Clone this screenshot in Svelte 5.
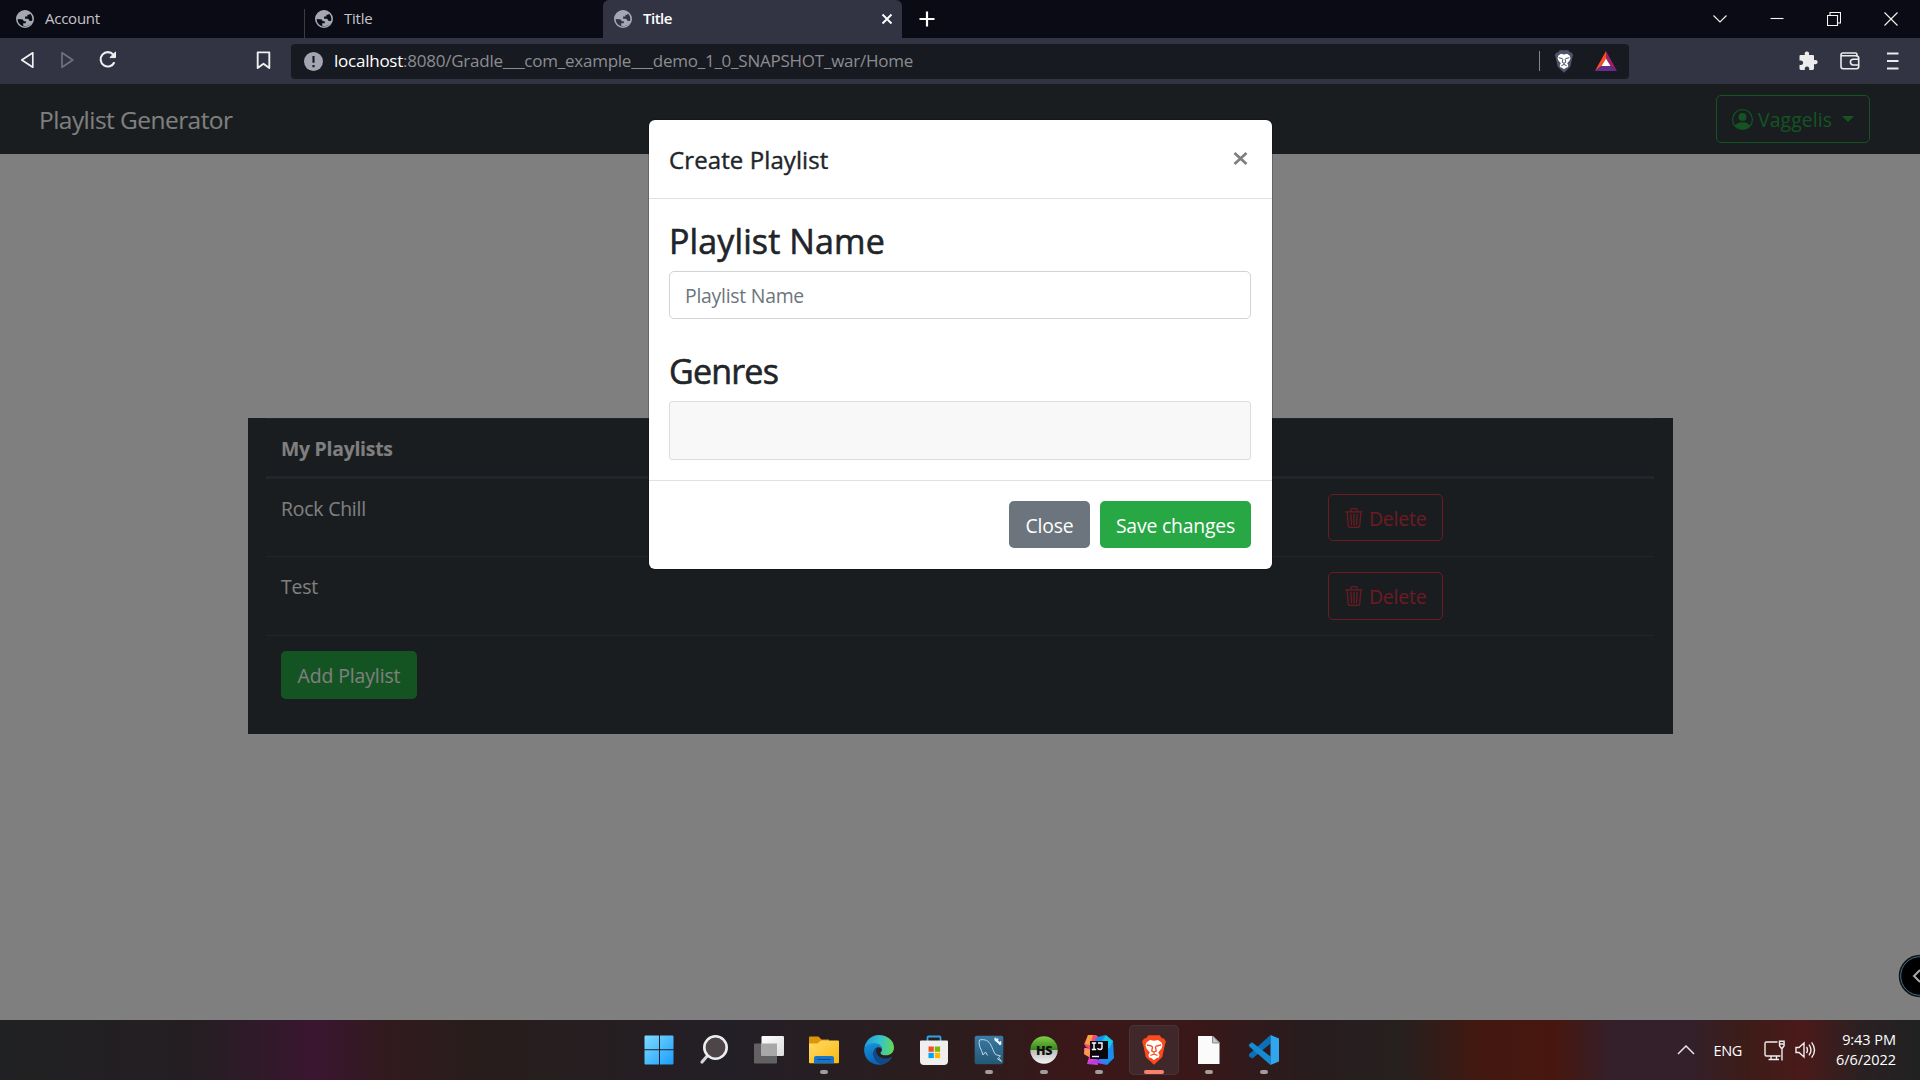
<script>
  const tabs = [
    { title: 'Account', active: false },
    { title: 'Title', active: false },
    { title: 'Title', active: true }
  ];
  const playlists = ['Rock Chill', 'Test'];
</script>

{#snippet globe()}
  <svg class="globe" viewBox="0 0 18 18">
    <circle cx="9" cy="9" r="8.2" fill="none" stroke="#a5a8b2" stroke-width="1.6" />
    <path fill="#a5a8b2" d="M9.8.6C5 .3.6 4 .6 9l4.8.2c1.500 0 2.200.9 2.200 2.100h2.200v1.900H7.200v2.600c3.900 1.300 8.600-1 9.800-5.200-.9.6-2.200.6-3.300.2-.9-.4-.8-1.900-1.900-2.100H9.100V6.600h2.300V4.700h1.500c.6 0 1.100-.5 1.100-1.200V2.400A8.300 8.300 0 0 0 9.800.6z" />
  </svg>
{/snippet}

{#snippet lion(body)}
  <path fill={body} d="M6.500 .3h11l2.600 3 1.900.1 2 3.300-1.100 2.900-2.600 12.400L12 29.800 3.700 22 1.100 9.600 0 6.700l2-3.300 1.900-.1z" />
  <path fill="#fff" d="M8 5l4 .8 4-.8 3.300 2.300 1.200 3-1 3.200-3.300 3.900 1.400 2.500-.8 2.600-2.200.6L12 25.200l-2.600-2.100-2.200-.6-.8-2.600 1.400-2.500-3.300-3.900-1-3.200 1.200-3z" />
  <g fill="none" stroke={body} stroke-width="1.300">
    <path d="M5 10l4.800 1.200M19 10l-4.800 1.200M9.500 11l1 1.200-.8 3.800L12 17.200l2.300-1.200-.8-3.800 1-1.200M12 17.200v2M8.500 20.500L12 18.900l3.500 1.600" />
  </g>
{/snippet}

<div class="screen">
  <header class="tabs">
    {#each tabs as tab, i}
      <div class="tab" class:active={tab.active} class:divided={i === 1}>
        {@render globe()}
        <span class="tab-title">{tab.title}</span>
        {#if tab.active}
          <svg class="tab-close" viewBox="0 0 12 12"><path d="M1.500 1.500l9 9m0-9l-9 9" stroke="#fff" stroke-width="1.900" /></svg>
        {/if}
      </div>
    {/each}
    <svg class="plus" viewBox="0 0 16 16"><path d="M8 .5v15M.5 8h15" stroke="#fff" stroke-width="2.200" /></svg>
    <div class="window-controls">
      <svg viewBox="0 0 14 14"><path d="M.5 3.500L7 10l6.500-6.500" /></svg>
      <svg viewBox="0 0 14 14"><path d="M.5 6.500h13" /></svg>
      <svg viewBox="0 0 14 14"><path d="M.5 3.500h10v10h-10zM3 3.500v-3h10.500v10.500h-3" /></svg>
      <svg viewBox="0 0 14 14"><path d="M.5.5l13 13m0-13l-13 13" /></svg>
    </div>
  </header>

  <div class="toolbar">
    <div class="nav-icons">
      <svg width="15" height="18" viewBox="0 0 15 18"><path d="M12.800 1.800v14.400L1.800 9z" fill="none" stroke="#f0f0f2" stroke-width="1.700" stroke-linejoin="round" /></svg>
      <svg width="15" height="18" viewBox="0 0 15 18"><path d="M2 1.800v14.400L12.800 9z" fill="none" stroke="#6e707d" stroke-width="1.700" stroke-linejoin="round" /></svg>
      <svg width="20" height="20" viewBox="0 0 20 20"><path d="M15.300 4.600A7.200 7.200 0 1 0 16.400 12.300" fill="none" stroke="#f0f0f2" stroke-width="2.100" /><path d="M17.500 2v5.600h-5.600z" fill="#f0f0f2" stroke="#f0f0f2" stroke-linejoin="round" /></svg>
    </div>
    <svg class="bookmark" viewBox="0 0 14 18"><path d="M1.500 1.300h11v14.900L7 12l-5.500 4.200z" fill="none" stroke="#f0f0f2" stroke-width="1.800" stroke-linejoin="round" /></svg>
    <div class="address">
      <svg class="info" viewBox="0 0 18 18"><circle cx="9" cy="9" r="9" fill="#a3a6b0" /><path d="M9 3.800v6.400M9 12.300v2.200" stroke="#181a21" stroke-width="2" /></svg>
      <span class="url"><b>localhost</b>:8080/Gradle___com_example___demo_1_0_SNAPSHOT_war/Home</span>
      <i class="address-divider"></i>
      <svg class="shield" viewBox="0 0 24 30">{@render lion('#50536a')}</svg>
      <svg class="bat" viewBox="0 0 22 20"><path d="M11 0v7.500L6.500 15 0 20z" fill="#ff4b24" /><path d="M11 0l11 20-6.500-5L11 7.500z" fill="#9e1f63" /><path d="M0 20l6.500-5h9l6.500 5z" fill="#662d91" /><path d="M11 7.500l4.500 7.500h-9z" fill="#fff" /></svg>
    </div>
    <div class="extensions">
      <svg width="20" height="20" viewBox="0 0 20 20"><path fill="#ececec" d="M2.500 4h4.400C6.200 1.900 7.100.5 8.900.5s2.700 1.400 2 3.500H15a1 1 0 0 1 1 1v4.200c2.200-.8 3.600.1 3.600 1.900S18.200 13.800 16 13v4.600a1.300 1.300 0 0 1-1.300 1.300h-3.600c.6-2.300-.4-3.500-2.100-3.500s-2.700 1.200-2.100 3.500H2.800a1.300 1.300 0 0 1-1.300-1.300v-3.800c2.300.6 3.600-.4 3.600-2.100S3.800 9 1.500 9.600V5a1 1 0 0 1 1-1z" /></svg>
      <svg class="wallet" width="20" height="18" viewBox="0 0 20 18"><path fill="none" stroke="#ececec" stroke-width="1.600" d="M3 1h12.500c1.200 0 1.600 1 1.600 2.700M1 3.700h14.500c2 0 3.200.8 3.200 2.400v8.500c0 1.300-.8 2.200-2.200 2.200H3.200C1.800 16.800 1 15.900 1 14.600V3C1 1.700 1.800 1 3 1M18.700 7.200h-5.400a2.800 2.800 0 0 0 0 5.800h5.400" /></svg>
      <svg width="12" height="18" viewBox="0 0 12 18"><path d="M0 1.500h11.500M0 9h11.500M0 16.500h11.500" stroke="#ececec" stroke-width="1.800" /></svg>
    </div>
  </div>

  <main class="page">
    <nav class="navbar">
      <span class="brand">Playlist Generator</span>
      <button class="btn user">
        <svg viewBox="0 0 16 16" fill="currentColor"><path d="M11 6a3 3 0 1 1-6 0 3 3 0 0 1 6 0z" /><path fill-rule="evenodd" d="M0 8a8 8 0 1 1 16 0A8 8 0 0 1 0 8zm8-7a7 7 0 0 0-5.468 11.370C3.242 11.226 4.805 10 8 10s4.757 1.225 5.468 2.370A7 7 0 0 0 8 1z" /></svg>
        <span>Vaggelis</span>
        <i class="caret"></i>
      </button>
    </nav>

    <section class="card">
      <div class="list">
        <div class="list-head">My Playlists</div>
        {#each playlists as name}
          <div class="list-row">
            <span>{name}</span>
            <button class="btn delete">
              <svg viewBox="0 0 16 16" fill="currentColor"><path d="M6.500 1h3a.5.5 0 0 1 .5.5v1H6v-1a.5.5 0 0 1 .5-.5ZM11 2.500v-1A1.500 1.500 0 0 0 9.500 0h-3A1.500 1.500 0 0 0 5 1.500v1H2.506a.580.580 0 0 0-.010 0H1.500a.5.5 0 0 0 0 1h.538l.853 10.660A2 2 0 0 0 4.885 16h6.230a2 2 0 0 0 1.994-1.840l.853-10.660h.538a.5.5 0 0 0 0-1h-.995a.590.590 0 0 0-.010 0H11Zm1.958 1-.846 10.580a1 1 0 0 1-.997.920h-6.230a1 1 0 0 1-.997-.920L3.042 3.500h9.916Zm-7.487 1a.5.5 0 0 1 .528.470l.5 8.500a.5.5 0 0 1-.998.060L5 5.030a.5.5 0 0 1 .470-.530Zm5.058 0a.5.5 0 0 1 .470.530l-.5 8.500a.5.5 0 1 1-.998-.060l.5-8.500a.5.5 0 0 1 .528-.470ZM8 4.500a.5.5 0 0 1 .5.5v8.500a.5.5 0 0 1-1 0V5a.5.5 0 0 1 .5-.5Z" /></svg>
              <span>Delete</span>
            </button>
          </div>
        {/each}
        <button class="btn add">Add Playlist</button>
      </div>
    </section>

    <div class="backdrop">
      <div class="modal">
        <div class="modal-header">
          <h5>Create Playlist</h5>
          <svg class="modal-close" viewBox="0 0 15 13"><path d="M1.500 1l12 11m0-11l-12 11" stroke="#7f7f7f" stroke-width="2.700" /></svg>
        </div>
        <div class="modal-body">
          <h3>Playlist Name</h3>
          <input type="text" placeholder="Playlist Name" />
          <h3 class="genres">Genres</h3>
          <div class="genre-box"></div>
        </div>
        <div class="modal-footer">
          <button class="btn close">Close</button>
          <button class="btn save">Save changes</button>
        </div>
      </div>
    </div>

    <div class="side-handle">
      <svg viewBox="0 0 44 44"><circle cx="22" cy="22" r="20.500" fill="#000" stroke="#10151a" stroke-width="1.500" /><circle cx="22" cy="22" r="19.300" fill="none" stroke="#47708a" stroke-width="1" /><path d="M22 16l-6 6 6 6" fill="none" stroke="#a8a8a8" stroke-width="2" /></svg>
    </div>
  </main>

  <footer class="taskbar">
    <div class="apps">
      <div class="app">
        <svg viewBox="0 0 30 30">
          <defs><linearGradient id="win" x1="0" y1="0" x2="1" y2="1" gradientUnits="objectBoundingBox"><stop offset="0" stop-color="#7fdcff" /><stop offset="1" stop-color="#1a9dfc" /></linearGradient></defs>
          <path fill="url(#win)" d="M1.500.5H15v13.700H.5V1.500a1 1 0 0 1 1-1zM16 .5h12.500a1 1 0 0 1 1 1v12.700H16zM.5 15.200H15v14.300H1.500a1 1 0 0 1-1-1zM16 15.200h13.500v13.300a1 1 0 0 1-1 1H16z" />
        </svg>
      </div>
      <div class="app">
        <svg viewBox="0 0 30 30"><path d="M9.500 19.500L3 27" stroke="#cfd6d9" stroke-width="3.200" stroke-linecap="round" /><circle cx="16.500" cy="12.500" r="11.200" fill="#4d4548" stroke="#eceff0" stroke-width="2.600" /></svg>
      </div>
      <div class="app">
        <svg viewBox="0 0 30 30">
          <defs><linearGradient id="pane" x1="0" y1="0" x2="1" y2="1"><stop offset="0" stop-color="#fff" /><stop offset="1" stop-color="#dcdcdc" /></linearGradient></defs>
          <rect x="0" y="8.500" width="23" height="20" rx="1.200" fill="#626262" /><rect x="7.500" y="1" width="22.500" height="20" rx="1.200" fill="url(#pane)" /><path d="M7.500 8.500H23v12.500H7.500z" fill="#a8a8a8" />
        </svg>
      </div>
      <div class="app running">
        <svg viewBox="0 0 30 30">
          <defs><linearGradient id="folder" x1="0" y1="0" x2="1" y2="1"><stop offset="0" stop-color="#ffdb69" /><stop offset="1" stop-color="#fbb80f" /></linearGradient></defs>
          <path fill="#dd9607" d="M1 1.500h8.500l3 3H20V10H0V2.500a1 1 0 0 1 1-1z" /><path fill="url(#folder)" d="M0 8.500h8.500l3.500-3h17a1 1 0 0 1 1 1v20.700a1 1 0 0 1-1 1H1a1 1 0 0 1-1-1z" /><path fill="#1676cc" d="M5 28.200V23a2 2 0 0 1 2-2h16a2 2 0 0 1 2 2v5.200z" /><path d="M8.500 24.500h13" stroke="#0a4b92" />
        </svg>
      </div>
      <div class="app">
        <svg viewBox="0 0 30 30">
          <defs>
            <linearGradient id="edgeTop" x1="0" y1=".4" x2="1" y2=".5"><stop offset="0" stop-color="#1f9be0" /><stop offset=".5" stop-color="#35c1cf" /><stop offset="1" stop-color="#62da55" /></linearGradient>
            <linearGradient id="edgeLow" x1="0" y1="0" x2=".3" y2="1"><stop offset="0" stop-color="#1794d8" /><stop offset="1" stop-color="#0b62b8" /></linearGradient>
          </defs>
          <path fill="url(#edgeTop)" d="M.4 13C1.200 5.800 7.300 0 15 0c8.400 0 15 5.600 15 12.400 0 4.900-3.800 7.900-8 7.900-3.300 0-5.500-1.200-5.500-2.400 0-.8 1.500-1.300 1.500-3.500 0-3-3-5.200-7-5.200C6.500 9.200 2.500 11 .4 13z" />
          <path fill="url(#edgeLow)" d="M.2 13.500C1.800 10.200 6 8.200 10.800 8.200c4.600 0 7.200 2.900 7.200 6-1.300-2-3.300-2.500-5-1.700-3.800 1.800-4.500 6.500-2.500 10.500 1.600 3.200 4.500 5.600 8 6.500C9.800 31.500-.8 25.300.2 13.500z" />
          <path fill="#114a8b" d="M13 12.500c-3.500 2-4.300 6.300-2.500 10.300 1.600 3.400 4.500 5.900 8 6.700 3.900-.9 7.300-3.300 9.300-6.500.4-.7-.2-1.200-.9-.8-5.700 3-13.500.3-14.600-5-.3-1.800 0-3.500.7-4.700z" />
        </svg>
      </div>
      <div class="app">
        <svg viewBox="0 0 30 30"><path d="M8.500 7V2.500a1 1 0 0 1 1-1h11a1 1 0 0 1 1 1V7" fill="none" stroke="#2ba7e8" stroke-width="1.800" /><path d="M2 5.500h26a1 1 0 0 1 1 1v19.500a4 4 0 0 1-4 4H5a4 4 0 0 1-4-4V6.500a1 1 0 0 1 1-1z" fill="#efefef" /><path d="M9.500 11.500h5.300v5.300H9.500z" fill="#f25022" /><path d="M15.800 11.500h5.300v5.300h-5.300z" fill="#7fba00" /><path d="M9.500 17.800h5.300v5.300H9.500z" fill="#00a4ef" /><path d="M15.800 17.800h5.300v5.300h-5.300z" fill="#ffb900" /></svg>
      </div>
      <div class="app running">
        <svg viewBox="0 0 30 30">
          <defs><linearGradient id="sql" x1="0" y1="0" x2="0" y2="1"><stop offset="0" stop-color="#3a7ba6" /><stop offset="1" stop-color="#235775" /></linearGradient></defs>
          <rect x=".7" y=".7" width="28.600" height="28.600" rx="2" fill="url(#sql)" /><path d="M9 20l-1.500-4.500C5.500 12 4.500 8 5.500 5c4-1 8 0 10.500 3.500 2.500 3.700 3.200 8 5.500 11l5 1.500-2 1.500 3 4-4.500-3M9 20l2.500-3 2 3.500" fill="none" stroke="#c5d6e1" stroke-width="1" /><path d="M21 3l1.500 2.500 4.500 4" stroke="#f5f7f8" stroke-width="2" fill="none" /><path d="M20.500 4.500l2.500 1.800 1-2.800M25 9.500l2-3" stroke="#f5f7f8" stroke-width="1.400" fill="none" />
        </svg>
      </div>
      <div class="app running">
        <svg viewBox="0 0 30 30">
          <defs><linearGradient id="hs" x1="0" y1="0" x2="0" y2="1"><stop offset="0" stop-color="#81cc48" /><stop offset=".49" stop-color="#35861b" /><stop offset=".5" stop-color="#b9bdb9" /><stop offset="1" stop-color="#f4f4f4" /></linearGradient></defs>
          <circle cx="15" cy="15" r="13.700" fill="url(#hs)" /><text x="15" y="19.500" text-anchor="middle" class="hs">HS</text>
        </svg>
      </div>
      <div class="app running">
        <svg viewBox="0 0 30 30"><path d="M4 0h8l4 3-8 11-6-2-2-3z" fill="#f74a73" /><path d="M4 0h5L6 10l-5-1z" fill="#fda13c" /><path d="M0 13l10-1 4 18-11-1 2-7-5-3z" fill="#e43cc5" /><path d="M1 13l7 2-3 7-5-3z" fill="#fb9a43" /><path d="M11 4l3-2 7-2 8 6 1 17-7 7-8-4z" fill="#168ff0" /><path d="M22 0l7 6-4 8-7-8z" fill="#17c9e8" /><path d="M3 29l10-5 10 6-10-2z" fill="#9b45f5" /><rect x="6" y="6" width="18" height="18" fill="#0c0610" /><path d="M7.800 8h4.400M7.800 14.500h4.400M10 8v6.500M14 8h4v4.500q0 2-2 2t-2.500-1.200" fill="none" stroke="#fff" stroke-width="1.400" /><path d="M8 21.500h7" stroke="#fff" stroke-width="1.400" /></svg>
      </div>
      <div class="app running focused">
        <svg viewBox="-3 0 30 30">{@render lion('#fb4a1d')}</svg>
      </div>
      <div class="app running">
        <svg viewBox="0 0 30 30"><path d="M4 1h15l6.500 6.500V29H4z" fill="#fbfbfb" /><path d="M18.500 1v7h7z" fill="#c9c9c9" stroke="#777" stroke-width=".8" /></svg>
      </div>
      <div class="app running">
        <svg viewBox="0 0 30 30"><path d="M21.500 0v8.500L3.500 23.500 0 21.500v-2.300z" fill="#0a70b8" /><path d="M0 9.500l3-2.300 18.500 14.300V30L0 11.300z" fill="#168bd2" /><path d="M21.500 0L30 3.500v23L21.500 30z" fill="#2fa6ee" /></svg>
      </div>
    </div>
    <div class="tray">
      <svg width="18" height="10" viewBox="0 0 18 10"><path d="M1 9l8-8 8 8" fill="none" stroke="#e8e4e5" stroke-width="1.500" /></svg>
      <span class="lang">ENG</span>
      <svg class="network" width="21" height="21" viewBox="0 0 21 21" fill="none" stroke="#f0eded" stroke-width="1.400"><path d="M13.500 2H2.500A1.500 1.500 0 0 0 1 3.500v11A1.500 1.500 0 0 0 2.500 16h14M7 16v3.500M12.500 16v3.500M4.500 19.500H15M18 8v12.500" /><path d="M15.500 1.200h4.600v4.500L18.500 8h-1.400l-1.600-2.300zM15.500 4h4.600" /></svg>
      <svg class="volume" width="21" height="18" viewBox="0 0 21 18" fill="none" stroke="#f0eded" stroke-width="1.400"><path d="M1 6.500h3L9 2v14l-5-4.500H1zM11.500 6q2 3 0 6M14 3.700q4 5.300 0 10.600M16.600 1.300q5.800 7.700 0 15.400" /></svg>
      <div class="clock"><span>9:43 PM</span><span>6/6/2022</span></div>
    </div>
  </footer>
</div>

<style>
  :global(body) { margin: 0; overflow: hidden; }
  .screen, .screen * { box-sizing: border-box; }
  .screen { width: 1920px; height: 1080px; display: flex; flex-direction: column; font-family: 'Open Sans', 'Noto Sans', sans-serif; font-size: 19.400px; letter-spacing: -0.2px; }
  svg { display: block; flex: none; }
  button, input { font: inherit; letter-spacing: inherit; }

  .tabs { height: 38px; background: #0b0b15; display: flex; align-items: flex-start; flex: none; }
  .tab { height: 38px; display: flex; align-items: center; width: 299px; padding-left: 11px; color: #c5c5c9; font-size: 15px; letter-spacing: -0.25px; }
  .tab:first-child { width: 304px; padding-left: 16px; }
  .tab.divided { border-left: 1px solid #3d3d40; height: 29px; margin-top: 9px; padding-bottom: 9px; padding-left: 10px; }
  .tab.active { background: #323443; border-radius: 6px 6px 0 0; color: #fff; font-weight: 600; letter-spacing: -0.5px; padding-right: 9px; }
  .globe { width: 18px; height: 18px; margin-right: 11px; }
  .tab-title { flex: 1; padding-bottom: 2px; }
  .tab-close { width: 12px; height: 12px; }
  .plus { width: 16px; height: 16px; margin: 11px 0 0 17px; }
  .window-controls { margin-left: auto; display: flex; gap: 43px; padding: 12px 22px 0 0; }
  .window-controls svg { width: 14px; height: 14px; fill: none; stroke: #f5f5f5; stroke-width: 1.100; }

  .toolbar { height: 46px; flex: none; background: #323443; display: flex; align-items: center; }
  .nav-icons { display: flex; align-items: center; gap: 25px; padding-left: 20px; padding-bottom: 2px; width: 256px; }
  .nav-icons svg:last-child { margin-left: -2px; }
  .bookmark { width: 15px; height: 19px; margin-bottom: 2px; }
  .address { margin-left: 20px; width: 1338px; height: 35px; border-radius: 4px; background: #181a21; display: flex; align-items: center; padding: 0 12px 0 13px; }
  .info { width: 19px; height: 19px; margin-right: 11px; }
  .url { flex: 1; color: #8b8d92; font-size: 17px; letter-spacing: -0.24px; padding-bottom: 2px; }
  .url b { font-weight: 400; color: #fff; }
  .address-divider { width: 1px; height: 20px; background: #83858b; margin-right: 14px; }
  .shield { width: 20px; height: 23px; margin-right: 21px; }
  .bat { width: 22px; height: 20px; }
  .extensions { margin-left: auto; display: flex; align-items: center; padding-right: 21px; }
  .wallet { margin: 0 27px 0 22px; }

  .page { position: relative; height: 936px; flex: none; background: #fff; overflow: hidden; }
  .navbar { height: 70px; background: #343a40; display: flex; justify-content: space-between; align-items: center; padding: 0 50px 0 39px; }
  .brand { color: #fff; font-size: 24.500px; letter-spacing: -0.55px; }
  .btn { height: 47.500px; border-radius: 5px; border: 1.250px solid transparent; padding: 0 15px; display: flex; align-items: center; background: none; color: #fff; }
  .btn span { padding-top: 1px; }
  .user { width: 154px; color: #28a745; border-color: #28a745; letter-spacing: 0.1px; }
  .user svg { width: 21px; height: 21px; margin-right: 5px; }
  .caret { margin: 0 0 1px auto; border: 6px solid transparent; border-top-color: currentColor; border-bottom: 0; }
  .card { margin: 264px 0 0 248px; width: 1425px; height: 316px; background: #343a40; color: #fff; padding: 0 19px 0 18px; }
  .list-head { height: 61px; border-top: 1px solid #454d55; border-bottom: 3px solid #454d55; font-weight: 700; letter-spacing: -0.25px; padding: 2px 15px 0; line-height: 55px; }
  .list-row { height: 79px; border-bottom: 1px solid #454d55; display: grid; grid-template-columns: 1047px auto; justify-content: start; padding: 15px 0 0 15px; line-height: 30px; }
  .list-row:nth-child(2) { height: 78px; }
  .list-row:nth-child(2) .btn { height: 47px; }
  .delete { width: 115px; color: #dc3545; border-color: #dc3545; }
  .delete svg { width: 20px; height: 20px; margin: 0 5px 0 0; }
  .list-row .delete { line-height: normal; }
  .add { margin: 15px 0 0 15px; width: 136px; background: #28a745; letter-spacing: -0.1px; }

  .backdrop { position: absolute; inset: 0; background: rgba(0, 0, 0, 0.5); display: flex; justify-content: center; align-items: flex-start; padding: 36px 0 0 1px; }
  .modal { width: 623px; height: 449px; background: #fff; border-radius: 6px; box-shadow: 0 0 0 1px rgba(0, 0, 0, 0.2); color: #212529; display: flex; flex-direction: column; }
  .modal-header { height: 79px; border-bottom: 1px solid #dee2e6; display: flex; justify-content: space-between; padding: 20px 24px 0 20px; }
  h5, h3 { margin: 0; font-weight: 500; }
  h5 { font-size: 24px; line-height: 40px; letter-spacing: 0.1px; -webkit-text-stroke: 0.4px currentColor; }
  .modal-close { width: 15px; height: 13px; margin-top: 12px; }
  .modal-body { height: 281px; padding: 20px 20px 0; }
  h3 { font-size: 34px; line-height: 44px; letter-spacing: 0.12px; height: 52px; -webkit-text-stroke: 0.6px currentColor; }
  input { display: block; width: 582px; height: 48px; border: 1px solid #ced4da; border-radius: 5px; padding: 0 15px; background: #fff; color: #495057; letter-spacing: -0.25px; }
  input::placeholder { color: #6c757d; opacity: 1; }
  .genres { margin-top: 30px; letter-spacing: -0.8px; }
  .genre-box { width: 582px; height: 59px; border: 1px solid #dcdde0; border-radius: 3px; background: #f8f8f8; }
  .modal-footer { flex: 1; border-top: 1px solid #dee2e6; display: flex; justify-content: flex-end; gap: 10px; padding: 20px 21px 0 0; }
  .close, .save, .add { justify-content: center; padding: 1px 0 0; }
  .close { width: 81px; height: 47px; background: #6c757d; }
  .save { width: 151px; height: 47px; background: #28a745; }
  .side-handle { position: absolute; left: 1898px; top: 870px; width: 44px; }

  .taskbar { height: 60px; flex: none; display: grid; grid-template-columns: 1fr auto 1fr; background: linear-gradient(90deg, #202122 0%, #241e22 10%, #3a1630 16.500%, #311a1e 20%, #281d1c 25%, #231f26 38%, #2c1c1d 50%, #3a1718 56%, #3a1718 62%, #281c1e 68%, #26201f 73%, #421810 77%, #47170f 81%, #33202b 84%, #33202a 88%, #3d1c18 91%, #4a1a1a 94%, #2a2022 97%, #202122 100%); }
  .apps { grid-column: 2; display: flex; padding: 5px 0 5px 2px; }
  .app { width: 55px; height: 50px; padding-top: 10px; position: relative; display: flex; justify-content: center; }
  .app svg { width: 30px; height: 30px; }
  .running::after { content: ''; position: absolute; left: 50%; bottom: 1px; width: 8px; height: 4px; margin-left: -4px; border-radius: 2px; background: #a39b9d; }
  .focused { width: 50px; margin: 0 2.500px; background: #40272a; border-radius: 5px; box-shadow: inset 0 0 0 1px #4a3336; }
  .focused::after { width: 20px; margin-left: -10px; background: #f5836a; }
  .hs { font: 800 12.500px 'Open Sans', sans-serif; letter-spacing: -0.5px; fill: #101010; }
  .tray { display: flex; align-items: center; justify-content: flex-end; padding-right: 24px; color: #fff; font-size: 14.500px; letter-spacing: -0.05px; }
  .lang { margin: 0 22px 0 19px; letter-spacing: -0.35px; }
  .volume { margin: 0 20px 0 10px; }
  .clock { display: flex; flex-direction: column; align-items: flex-end; line-height: 20px; padding-bottom: 1px; }
</style>
